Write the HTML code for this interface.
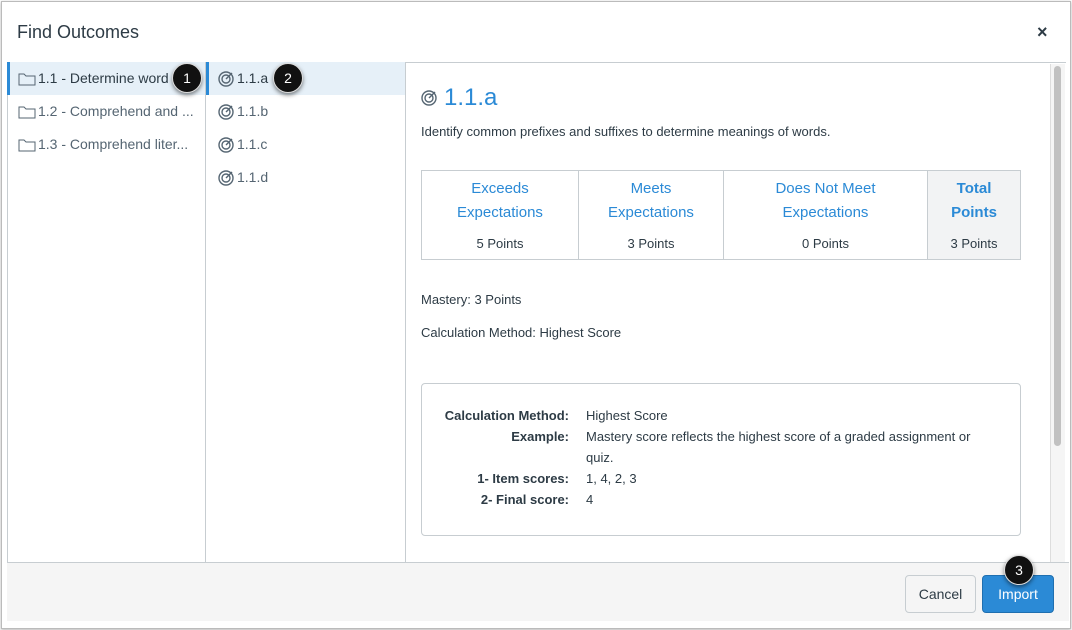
<!DOCTYPE html><html><head><style>
body{margin:0;width:1072px;height:630px;background:#fff;font-family:"Liberation Sans",sans-serif;position:relative;overflow:hidden;color:#2d3b45}
.dlg{position:absolute;left:1px;top:1px;width:1068px;height:626px;border:1px solid #bbb;box-shadow:0 1px 3px rgba(0,0,0,.3)}
.a{position:absolute}
.t{font-size:18px;left:17px;top:22px;color:#2d3b45}
.x{left:1037px;top:22px;font-size:18px;font-weight:bold}
.row{position:absolute;height:33px;line-height:33px;font-size:14px;color:#556572;display:flex;align-items:center}
.sel{background:#e6f0f8;color:#2d3b45;border-left:3px solid #2b8ad6}
.badge{position:absolute;width:28px;height:28px;border-radius:50%;background:#111;color:#fff;font-size:14px;text-align:center;line-height:28px;box-shadow:0 2px 4px rgba(0,0,0,.5);border:1px solid #ddd}
table{border-collapse:collapse;position:absolute;left:421px;top:170px;width:600px}
td{border:1px solid #c7cdd1;text-align:center;vertical-align:top;font-size:15px;color:#2b8ad6;padding:6px 4px 0;height:82px;line-height:24px}
td small{display:block;font-size:13px;color:#2d3b45;margin-top:7px}
.p{font-size:13px;color:#2d3b45}
</style></head><body>
<div class="dlg"></div>
<div class="a t">Find Outcomes</div>
<div class="a x">×</div>
<div class="a" style="left:7px;top:62px;width:1058px;height:500px;border-top:1px solid #c7cdd1;border-left:1px solid #c7cdd1"></div>
<div class="a" style="left:205px;top:62px;width:1px;height:500px;background:#c7cdd1"></div>
<div class="a" style="left:405px;top:62px;width:1px;height:500px;background:#c7cdd1"></div>
<div class="row sel" style="left:7px;top:62px;width:195px"><svg width="18" height="14" style="margin:0 2px 0 8px" viewBox="0 0 18 14"><path d="M1 2h5l2 2h9v9H1z" fill="none" stroke="#556572"/></svg>1.1 - Determine word</div>
<div class="row" style="left:10px;top:95px;width:195px"><svg width="18" height="14" style="margin:0 2px 0 8px" viewBox="0 0 18 14"><path d="M1 2h5l2 2h9v9H1z" fill="none" stroke="#556572"/></svg>1.2 - Comprehend and ...</div>
<div class="row" style="left:10px;top:128px;width:195px"><svg width="18" height="14" style="margin:0 2px 0 8px" viewBox="0 0 18 14"><path d="M1 2h5l2 2h9v9H1z" fill="none" stroke="#556572"/></svg>1.3 - Comprehend liter...</div>
<div class="row sel" style="left:206px;top:62px;width:196px"><svg width="16" height="16" style="margin:0 3px 0 9px" viewBox="0 0 16 16" fill="none" stroke="#556572" stroke-width="1.4"><circle cx="8" cy="8" r="7"/><circle cx="8" cy="8" r="4"/><path d="M8 8l6-6"/></svg>1.1.a</div>
<div class="row" style="left:209px;top:95px"><svg width="16" height="16" style="margin:0 3px 0 9px" viewBox="0 0 16 16" fill="none" stroke="#556572" stroke-width="1.4"><circle cx="8" cy="8" r="7"/><circle cx="8" cy="8" r="4"/><path d="M8 8l6-6"/></svg>1.1.b</div>
<div class="row" style="left:209px;top:128px"><svg width="16" height="16" style="margin:0 3px 0 9px" viewBox="0 0 16 16" fill="none" stroke="#556572" stroke-width="1.4"><circle cx="8" cy="8" r="7"/><circle cx="8" cy="8" r="4"/><path d="M8 8l6-6"/></svg>1.1.c</div>
<div class="row" style="left:209px;top:161px"><svg width="16" height="16" style="margin:0 3px 0 9px" viewBox="0 0 16 16" fill="none" stroke="#556572" stroke-width="1.4"><circle cx="8" cy="8" r="7"/><circle cx="8" cy="8" r="4"/><path d="M8 8l6-6"/></svg>1.1.d</div>
<div class="badge" style="left:172px;top:63px">1</div>
<div class="badge" style="left:273px;top:63px">2</div>
<div class="a" style="left:421px;top:84px;display:flex;align-items:center;color:#2b8ad6;font-size:24px"><svg width="16" height="16" style="margin-right:7px" viewBox="0 0 16 16" fill="none" stroke="#556572" stroke-width="1.4"><circle cx="8" cy="8" r="7"/><circle cx="8" cy="8" r="4"/><path d="M8 8l6-6"/></svg>1.1.a</div>
<div class="a p" style="left:421px;top:124px">Identify common prefixes and suffixes to determine meanings of words.</div>
<table><tr><td style="width:148px">Exceeds<br>Expectations<small>5 Points</small></td><td style="width:136px">Meets<br>Expectations<small>3 Points</small></td><td>Does Not Meet<br>Expectations<small>0 Points</small></td><td style="width:84px;background:#f2f3f4;font-weight:bold">Total<br>Points<small style="font-weight:normal">3 Points</small></td></tr></table>
<div class="a p" style="left:421px;top:292px">Mastery: 3 Points</div>
<div class="a p" style="left:421px;top:325px">Calculation Method: Highest Score</div>
<div class="a" style="left:421px;top:383px;width:598px;height:151px;border:1px solid #c7cdd1;border-radius:4px"></div>
<div class="a p" style="left:421px;top:405px;width:148px;text-align:right;font-weight:bold;line-height:21px">Calculation Method:<br>Example:<br>&nbsp;<br>1- Item scores:<br>2- Final score:</div>
<div class="a p" style="left:586px;top:405px;width:410px;line-height:21px">Highest Score<br>Mastery score reflects the highest score of a graded assignment or quiz.<br>1, 4, 2, 3<br>4</div>
<div class="a" style="left:1050px;top:64px;width:14px;height:498px;background:#f5f5f5;border-left:1px solid #ddd"></div>
<div class="a" style="left:1054px;top:66px;width:7px;height:380px;background:#c1c1c1;border-radius:4px"></div>
<div class="a" style="left:7px;top:562px;width:1062px;height:58px;background:#f5f5f5;border-top:1px solid #c7cdd1"></div>
<div class="a" style="left:905px;top:575px;width:69px;height:36px;border:1px solid #c7cdd1;border-radius:4px;background:#f5f5f5;font-size:14px;text-align:center;line-height:36px">Cancel</div>
<div class="a" style="left:982px;top:575px;width:70px;height:36px;border:1px solid #1f6fb0;border-radius:4px;background:#2b8ad6;color:#fff;font-size:14px;text-align:center;line-height:36px">Import</div>
<div class="badge" style="left:1004px;top:555px">3</div>
</body></html>
